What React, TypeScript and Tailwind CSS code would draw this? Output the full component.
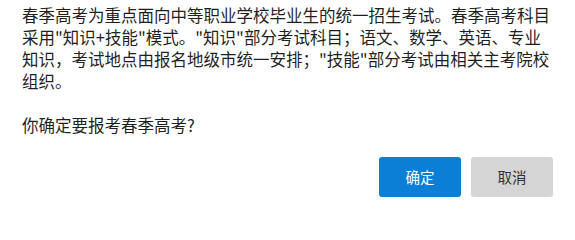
import React from "react";

export default function App() {
  return (
    <div
      className="w-[575px] h-[215px] bg-white px-[22px] pt-[4px] text-[#1f1f1f]"
      style={{ fontFamily: '"Noto Sans CJK SC", "Noto Sans", sans-serif' }}
    >
      <div className="text-[16.5px] leading-[22px]">
        <p>
          春季高考为重点面向中等职业学校毕业生的统一招生考试。春季高考科目采用"知识+技能"模式。"知识"部分考试科目；语文、数学、英语、专业知识，考试地点由报名地级市统一安排；"技能"部分考试由相关主考院校组织。
        </p>
        <p className="mt-[22px]">你确定要报考春季高考?</p>
      </div>
      <div className="mt-[21px] flex justify-end gap-[10px]">
        <button className="w-[82px] h-[40px] rounded-[3px] bg-[#0a7fd5] text-white text-[14.5px]">
          确定
        </button>
        <button className="w-[82px] h-[40px] rounded-[3px] bg-[#d5d5d5] text-[#333] text-[14.5px]">
          取消
        </button>
      </div>
    </div>
  );
}
